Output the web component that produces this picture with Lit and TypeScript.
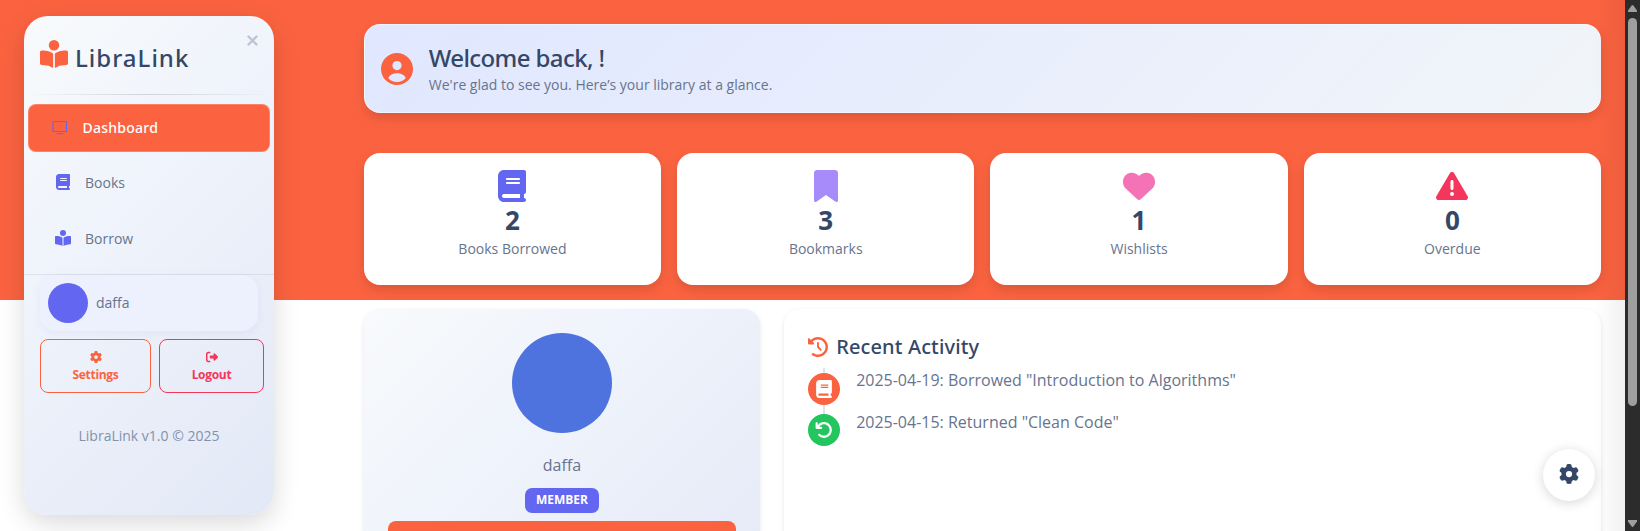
import { LitElement, html, css, svg } from "lit";
import { customElement } from "lit/decorators.js";

const ICONS: Record<string, [string, string]> = {
  reader: ["0 0 512 512", "M160 96a96 96 0 1 1 192 0A96 96 0 1 1 160 96zm80 152V512l-48.4-24.2c-20.9-10.4-43.5-17-66.8-19.3l-96-9.6C12.5 457.2 0 443.5 0 427V224c0-17.7 14.3-32 32-32H62.3c63.6 0 125.6 19.6 177.7 56zm32 264V248c52.1-36.4 114.1-56 177.7-56H480c17.7 0 32 14.3 32 32V427c0 16.4-12.5 30.2-28.8 31.8l-96 9.6c-23.2 2.3-45.9 8.9-66.8 19.3L272 512z"],
  book: ["0 0 448 512", "M96 0C43 0 0 43 0 96V416c0 53 43 96 96 96H384h32c17.7 0 32-14.3 32-32s-14.3-32-32-32V384c17.7 0 32-14.3 32-32V32c0-17.7-14.3-32-32-32H384 96zm0 384H352v64H96c-17.7 0-32-14.3-32-32s14.3-32 32-32zm32-240c0-8.8 7.2-16 16-16H336c8.8 0 16 7.2 16 16s-7.2 16-16 16H144c-8.8 0-16-7.2-16-16zm16 48H336c8.8 0 16 7.2 16 16s-7.2 16-16 16H144c-8.8 0-16-7.2-16-16s7.2-16 16-16z"],
  bookmark: ["0 0 384 512", "M0 48V487.7C0 501.1 10.9 512 24.3 512c5 0 9.9-1.5 14-4.4L192 400 345.7 507.6c4.1 2.9 9 4.4 14 4.4c13.4 0 24.3-10.9 24.3-24.3V48c0-26.5-21.5-48-48-48H48C21.5 0 0 21.5 0 48z"],
  heart: ["0 0 512 512", "M47.6 300.4L228.3 469.1c7.5 7 17.4 10.9 27.7 10.9s20.2-3.9 27.7-10.9L464.4 300.4c30.4-28.3 47.6-68 47.6-109.5v-5.8c0-69.9-50.5-129.5-119.4-141C347 36.5 300.6 51.4 268 84L256 96 244 84c-32.6-32.6-79-47.5-124.6-39.9C50.5 55.6 0 115.2 0 185.1v5.8c0 41.5 17.2 81.2 47.6 109.5z"],
  warning: ["0 0 512 512", "M256 32c14.2 0 27.3 7.5 34.5 19.8l216 368c7.3 12.4 7.3 27.7 .2 40.1S486.3 480 472 480H40c-14.3 0-27.6-7.7-34.7-20.1s-7-27.8 .2-40.1l216-368C228.7 39.5 241.8 32 256 32zm0 128c-13.3 0-24 10.7-24 24V296c0 13.3 10.7 24 24 24s24-10.7 24-24V184c0-13.3-10.7-24-24-24zm32 224a32 32 0 1 0 -64 0 32 32 0 1 0 64 0z"],
  gear: ["0 0 512 512", "M495.9 166.6c3.2 8.7 .5 18.4-6.4 24.6l-43.3 39.4c1.1 8.3 1.7 16.8 1.7 25.4s-.6 17.1-1.7 25.4l43.3 39.4c6.9 6.2 9.6 15.9 6.4 24.6c-4.4 11.9-9.7 23.3-15.8 34.3l-4.7 8.1c-6.6 11-14 21.4-22.1 31.2c-5.9 7.2-15.7 9.6-24.5 6.8l-55.7-17.7c-13.4 10.3-28.2 18.9-44 25.4l-12.5 57.1c-2 9.1-9 16.3-18.2 17.8c-13.8 2.3-28 3.5-42.5 3.5s-28.7-1.2-42.5-3.5c-9.2-1.5-16.2-8.7-18.2-17.8l-12.5-57.1c-15.8-6.5-30.6-15.1-44-25.4L83.1 425.9c-8.8 2.8-18.6 .3-24.5-6.8c-8.1-9.8-15.5-20.2-22.1-31.2l-4.7-8.1c-6.1-11-11.4-22.4-15.8-34.3c-3.2-8.7-.5-18.4 6.4-24.6l43.3-39.4C64.6 273.1 64 264.6 64 256s.6-17.1 1.7-25.4L22.4 191.2c-6.9-6.2-9.6-15.9-6.4-24.6c4.4-11.9 9.7-23.3 15.8-34.3l4.7-8.1c6.6-11 14-21.4 22.1-31.2c5.9-7.2 15.7-9.6 24.5-6.8l55.7 17.7c13.4-10.3 28.2-18.9 44-25.4l12.5-57.1c2-9.1 9-16.3 18.2-17.8C227.3 1.2 241.5 0 256 0s28.7 1.2 42.5 3.5c9.2 1.5 16.2 8.7 18.2 17.8l12.5 57.1c15.8 6.5 30.6 15.1 44 25.4l55.7-17.7c8.8-2.8 18.6-.3 24.5 6.8c8.1 9.8 15.5 20.2 22.1 31.2l4.7 8.1c6.1 11 11.4 22.4 15.8 34.3zM256 336a80 80 0 1 0 0-160 80 80 0 1 0 0 160z"],
  history: ["0 0 512 512", "M75 75L41 41C25.9 25.9 0 36.6 0 57.9V168c0 13.3 10.7 24 24 24H134.1c21.4 0 32.1-25.9 17-41l-30.8-30.8C155 85.5 203 64 256 64c106 0 192 86 192 192s-86 192-192 192c-40.8 0-78.6-12.7-109.7-34.4c-14.5-10.1-34.4-6.6-44.6 7.9s-6.6 34.4 7.9 44.6C151.2 495 201.7 512 256 512c141.4 0 256-114.6 256-256S397.4 0 256 0C185.3 0 121.3 28.7 75 75zm181 53c-13.3 0-24 10.7-24 24V256c0 6.4 2.5 12.5 7 17l72 72c9.4 9.4 24.6 9.4 33.9 0s9.4-24.6 0-33.9l-65-65V152c0-13.3-10.7-24-24-24z"],
  undo: ["0 0 512 512", "M125.7 160H176c17.7 0 32 14.3 32 32s-14.3 32-32 32H48c-17.7 0-32-14.3-32-32V64c0-17.7 14.3-32 32-32s32 14.3 32 32v51.2L97.6 97.6c87.5-87.5 229.3-87.5 316.8 0s87.5 229.3 0 316.8s-229.3 87.5-316.8 0c-12.5-12.5-12.5-32.8 0-45.3s32.8-12.5 45.3 0c62.5 62.5 163.8 62.5 226.3 0s62.5-163.8 0-226.3s-163.8-62.5-226.3 0L125.7 160z"],
  logout: ["0 0 512 512", "M377.9 105.9L500.7 228.7c7.2 7.2 11.3 17.1 11.3 27.3s-4.1 20.1-11.3 27.3L377.9 406.1c-6.4 6.4-15 9.9-24 9.9c-18.7 0-33.9-15.2-33.9-33.9l0-62.1-128 0c-17.7 0-32-14.3-32-32l0-64c0-17.7 14.3-32 32-32l128 0 0-62.1c0-18.7 15.2-33.9 33.9-33.9c9 0 17.6 3.6 24 9.9zM160 96L96 96c-17.7 0-32 14.3-32 32l0 256c0 17.7 14.3 32 32 32l64 0c17.7 0 32 14.3 32 32s-14.3 32-32 32l-64 0c-53 0-96-43-96-96L0 128C0 75 43 32 96 32l64 0c17.7 0 32 14.3 32 32s-14.3 32-32 32z"],
  user: ["0 0 32 32", "M16 0a16 16 0 1 0 0 32a16 16 0 1 0 0-32zM16 8a4.6 4.6 0 1 1 0 9.2a4.6 4.6 0 1 1 0-9.2zM7.2 25C8.500 21.800 12 20.200 16 20.200s7.500 1.600 8.800 4.800C22.800 27.600 19.500 28.900 16 28.900s-6.800-1.300-8.800-3.900z"],
  monitor: ["0 0 16 14", "M1.500 0h12.500q1 0 1 1v9q0 1-1 1h-12.500q-1 0-1-1v-9q0-1 1-1zM1.600 1.100v8.800h12.300v-8.800zM4.500 12.300h6.500v1h-6.500z"],
};

const icon = (name: string, cls: string) => {
  const [box, d] = ICONS[name];
  return html`<svg class="icon ${cls}" viewBox=${box} aria-hidden="true">${svg`<path fill-rule=${name === "monitor" || name === "user" ? "evenodd" : "nonzero"} d=${d}></path>`}</svg>`;
};

const STATS = [
  { icon: "book", tone: "indigo", value: 2, label: "Books Borrowed" },
  { icon: "bookmark", tone: "violet", value: 3, label: "Bookmarks" },
  { icon: "heart", tone: "pink", value: 1, label: "Wishlists" },
  { icon: "warning", tone: "red", value: 0, label: "Overdue" },
];

const ACTIVITY = [
  { icon: "book", tone: "borrowed", text: '2025-04-19: Borrowed "Introduction to Algorithms"' },
  { icon: "undo", tone: "returned", text: '2025-04-15: Returned "Clean Code"' },
];

@customElement("app-root")
export class AppRoot extends LitElement {
  static styles = css`
    :host { display: block; font-family: "Open Sans", "Noto Sans", sans-serif; color: #67748e; }
    * { box-sizing: border-box; }
    .icon { display: block; fill: currentColor; flex: none; }
    .page { display: flex; height: 531px; overflow: hidden;
      background: linear-gradient(#fb6340 0 300px, #fff 300px); }
    .sidebar { flex: none; width: 250px; height: 499px; margin: 16px 0 0 24px; border-radius: 24px;
      background: linear-gradient(135deg, #f8fafc 0%, #eff3fb 40%, #e2e8f6 100%);
      box-shadow: 0 8px 26px rgba(0,0,0,.15); display: flex; flex-direction: column; position: relative; }
    .brand { display: flex; height: 78px; padding: 24px 0 0 16px; }
    .i-brand { width: 28px; height: 28px; color: #fb6340; }
    .brand-name { margin: 0 0 0 7px; font-family: "Noto Sans", sans-serif; font-size: 24px; line-height: 36px; font-weight: 500; color: #344767; letter-spacing: 1px; }
    .close { position: absolute; right: 16.500px; top: 18.500px; width: 11px; height: 11px; stroke: #bcc5d6; stroke-width: 2.4; stroke-linecap: round; }
    .rule { flex: none; height: 1px; background: linear-gradient(90deg, transparent, rgba(0,0,0,.14), transparent); }
    .nav { display: flex; flex-direction: column; }
    .link { display: flex; align-items: center; font-size: 14px; height: 56px; padding-left: 31px; }
    .link.active { height: 48px; margin: 9px 4px 2px; border-radius: 8px; background: #fb6340;
      color: #fff; font-family: "Noto Sans", sans-serif; font-weight: 500; letter-spacing: .25px; border: 1px solid rgba(255,255,255,.2); padding: 0 0 1px 23px; }
    .slot { width: 30px; color: #6366f1; }
    .link.active .slot { width: 30.500px; }
    .i-monitor { width: 16px; height: 14px; }
    .i-book { width: 14px; height: 16px; margin-left: .5px; }
    .i-reader { width: 16px; height: 16px; margin-left: -.5px; }
    .foot { margin-top: 8px; border-top: 1px solid rgba(0,0,0,.07); padding: 0 10px 0 16px; display: flex; flex-direction: column; }
    .me { display: flex; align-items: center; gap: 8px; height: 56px; width: 218px; padding-left: 8px; border-radius: 16px;
      background: #edf1fe; box-shadow: 0 2px 8px rgba(99,102,241,.07); font-size: 14px; padding-bottom: 1px; }
    .dot { width: 40px; height: 40px; border-radius: 50%; background: #6366f1; }
    .actions { display: flex; gap: 8px; margin-top: 8px; }
    .btn { display: flex; flex-direction: column; align-items: center; height: 54px; padding-top: 11px; border: 1px solid currentColor;
      border-radius: 8px; font-size: 12px; font-weight: 700; line-height: 18px; letter-spacing: -.3px; }
    .settings { width: 111px; color: #fb6340; }
    .logout { width: 105px; color: #f5365c; }
    .i-small { width: 12px; height: 12px; margin-bottom: 3px; }
    .version { margin-top: 32px; text-align: center; font-size: 14px; line-height: 22px; color: #8392ab; }
    .main { flex: 1; min-width: 0; padding: 24px 24px 0 89.800px; }
    .welcome { display: flex; align-items: center; gap: 16px; height: 89px; border-radius: 16px;
      border: 1px solid rgba(255,255,255,.5); padding: 0 16px;
      background: linear-gradient(135deg, #e0e7ff, #f1f5f9); box-shadow: 0 5px 12px rgba(0,0,0,.13); }
    .i-user { width: 32px; height: 32px; color: #fb6340; }
    .title { margin-top: -1px; font-family: "Noto Sans", sans-serif; font-size: 24px; line-height: 32px; font-weight: 500; color: #344767; letter-spacing: -.6px; }
    .sub { font-size: 14px; line-height: 21px; }
    .stats { display: grid; grid-template-columns: repeat(4, 1fr); gap: 16px; margin-top: 40px; }
    .stat { height: 132px; border-radius: 16px; background: #fff; box-shadow: 0 5px 12px rgba(0,0,0,.13);
      display: flex; flex-direction: column; align-items: center; padding-top: 17px; }
    .i-stat { height: 32px; width: auto; }
    .indigo { color: #6366f1; } .violet { color: #a78bfa; } .pink { color: #f472b6; } .red { color: #f5365c; }
    .value { font-size: 26px; line-height: 36px; font-weight: 700; color: #344767; }
    .label { font-size: 14px; line-height: 22px; }
    .cols { display: grid; grid-template-columns: 396.33px 1fr; gap: 24px; margin-top: 24px; }
    .card { height: 340px; border-radius: 16px; background: #fff; box-shadow: 0 2px 5px rgba(0,0,0,.1); }
    .profile { background: linear-gradient(135deg, #f8fafc 0%, #eff3fb 40%, #e2e8f6 100%); display: flex; flex-direction: column;
      align-items: center; padding: 24px 24px 0; }
    .avatar { flex: none; width: 100px; height: 100px; border-radius: 50%; background: #4e73df; }
    .name { margin-top: 19px; font-size: 16px; line-height: 26px; }
    .badge { margin-top: 10px; width: 74px; height: 25px; border-radius: 7px; background: #6366f1; color: #fff; font-size: 12px;
      line-height: 23px; font-weight: 700; text-align: center; }
    .cta { align-self: stretch; margin-top: 8px; height: 40px; border-radius: 8px; background: #fb6340; }
    .activity { padding: 24px; }
    .heading { display: flex; align-items: center; gap: 8px; height: 27px; font-family: "Noto Sans", sans-serif; font-size: 20px; font-weight: 500; letter-spacing: .14px; color: #344767; }
    .i-history { width: 20px; height: 20px; color: #fb6340; }
    .timeline { display: flex; flex-direction: column; margin-top: 8px; padding-top: 5px; gap: 9px; font-size: 16px;
      background: linear-gradient(#dee2e6, #dee2e6) 15px 0 / 2px 60px no-repeat; }
    .event { display: flex; gap: 16px; height: 32px; line-height: 24px; }
    .event-text { margin-top: -5px; }
    .event:last-child .event-text { margin-top: -4px; }
    .marker { display: grid; place-items: center; width: 32px; height: 32px; border-radius: 50%; color: #fff; }
    .borrowed { background: #fb6340; } .returned { background: #22c55e; }
    .i-event { height: 18px; width: 18px; }
    .fab { position: absolute; left: 1543px; top: 449px; width: 52px; height: 52px; border-radius: 50%; background: #fff; color: #344767;
      display: grid; place-items: center; box-shadow: 0 2px 12px rgba(0,0,0,.16); padding: 0 0 2px 0; }
    .i-fab { width: 20px; height: 20px; }
    .edge { position: absolute; left: 1595px; top: 0; width: 30px; height: 531px; background: linear-gradient(90deg, transparent, rgba(0,0,0,.055)); }
    .scroll { flex: none; width: 15px; background: #2c2c2c; display: flex; flex-direction: column; align-items: center; padding: 5px 0 4px; }
    .arrow { display: block; width: 9px; height: 7px; fill: #9f9f9f; }
    .thumb { width: 9px; height: 388px; margin: 6px 0 auto; border-radius: 5px; background: #9f9f9f; }
  `;

  render() {
    return html`<div class="page">
      <aside class="sidebar">
        <div class="brand">${icon("reader", "i-brand")}<span class="brand-name">LibraLink</span></div>
        <svg class="close" viewBox="0 0 11 11"><path d="M1.500 1.500l8 8M9.500 1.500l-8 8"></path></svg>
        <div class="rule"></div>
        <nav class="nav">
          <div class="link active"><span class="slot">${icon("monitor", "i-monitor")}</span>Dashboard</div>
          <div class="link"><span class="slot">${icon("book", "i-book")}</span>Books</div>
          <div class="link"><span class="slot">${icon("reader", "i-reader")}</span>Borrow</div>
        </nav>
        <div class="foot">
          <div class="me"><span class="dot"></span>daffa</div>
          <div class="actions">
            <div class="btn settings">${icon("gear", "i-small")}Settings</div>
            <div class="btn logout">${icon("logout", "i-small")}Logout</div>
          </div>
        </div>
        <div class="version">LibraLink v1.0 © 2025</div>
      </aside>
      <main class="main">
        <section class="welcome">${icon("user", "i-user")}
          <div><div class="title">Welcome back, !</div><div class="sub">We're glad to see you. Here’s your library at a glance.</div></div>
        </section>
        <section class="stats">${STATS.map((s) => html`<div class="stat">${icon(s.icon, `i-stat ${s.tone}`)}
          <div class="value">${s.value}</div><div class="label">${s.label}</div></div>`)}</section>
        <section class="cols">
          <div class="card profile"><div class="avatar"></div><div class="name">daffa</div><div class="badge">MEMBER</div><div class="cta"></div></div>
          <div class="card activity">
            <div class="heading">${icon("history", "i-history")}Recent Activity</div>
            <div class="timeline">${ACTIVITY.map((a) => html`<div class="event"><span class="marker ${a.tone}">${icon(a.icon, "i-event")}</span><span class="event-text">${a.text}</span></div>`)}</div>
          </div>
        </section>
      </main>
      <div class="edge"></div>
      <div class="fab">${icon("gear", "i-fab")}</div>
      <div class="scroll">
        <svg class="arrow" viewBox="0 0 9 7"><path d="M3.700 .500q.800-1 1.600 0L9 5.500V7H0V5.500z"></path></svg>
        <div class="thumb"></div>
        <svg class="arrow" viewBox="0 0 9 7"><path d="M3.700 6.500q.800 1 1.600 0L9 1.500V0H0v1.500z"></path></svg>
      </div>
    </div>`;
  }
}
